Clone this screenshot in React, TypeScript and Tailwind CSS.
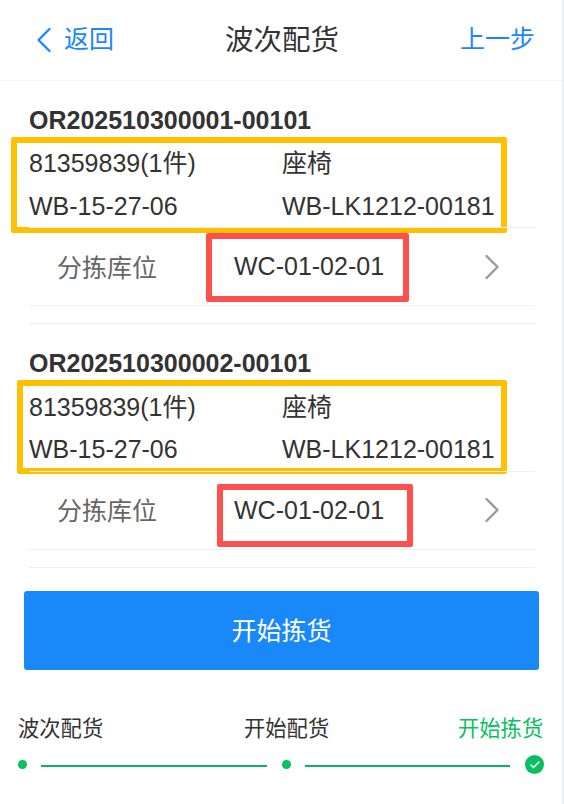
import { ChevronLeft, ChevronRight, Check } from 'lucide-react';

const font = { fontFamily: '"Liberation Sans", "Noto Sans CJK SC", sans-serif' };

function OrderCard({ code, yellow, red }: { code: string; yellow: string; red: string }) {
  return (
    <section className="relative">
      <h2 className="h-[40.5px] text-[25px] font-bold leading-[36px] text-[#333]">{code}</h2>
      <div className="relative">
        <div className="grid grid-cols-[253px_1fr] text-[25px] leading-[42.5px] text-[#333]">
          <span>81359839(1件)</span>
          <span>座椅</span>
          <span>WB-15-27-06</span>
          <span>WB-LK1212-00181</span>
        </div>
        <div className={`absolute rounded-[2px] border-[6px] border-[#ffc000] ${yellow}`} />
      </div>
      <div className="relative flex h-[79px] items-center border-y border-[#f0f0f0] pl-[28px] pr-[21px]">
        <span className="w-[177px] pt-[3px] text-[25px] text-[#666]">分拣库位</span>
        <span className="flex-1 text-[25px] text-[#333]">WC-01-02-01</span>
        <ChevronRight size={44} strokeWidth={1.3} className="text-[#999]" />
        <div className={`absolute rounded-[2px] border-[6px] border-[#ff5050] ${red}`} />
      </div>
      <div className="h-[18px] border-b border-[#f0f0f0]" />
    </section>
  );
}

function Dot() {
  return <span className="h-[9px] w-[9px] shrink-0 rounded-full bg-[#07c160]" />;
}

export default function App() {
  return (
    <div className="h-[804px] w-[564px] overflow-hidden border-r-2 border-[#eef0f5] bg-white" style={font}>
      <header className="flex h-[81px] items-center justify-between border-b border-[#f5f5f5] pl-[29px] pr-[27px]">
        <div className="flex w-[120px] items-center text-[25px] text-[#1989fa]">
          <ChevronLeft size={44} strokeWidth={1.3} className="-ml-[7px] shrink-0" />
          <span className="-ml-[2px]">返回</span>
        </div>
        <h1 className="text-[28.5px] text-[#333]">波次配货</h1>
        <div className="w-[120px] text-right text-[25px] text-[#1989fa]">上一步</div>
      </header>

      <main className="flex flex-col gap-[21px] pl-[29px] pr-[27px] pt-[20.75px]">
        <OrderCard code="OR202510300001-00101" yellow="-left-[18px] -top-[5.5px] h-[96px] w-[496px]" red="left-[177px] top-[5px] h-[69px] w-[203px]" />
        <OrderCard code="OR202510300002-00101" yellow="-left-[12px] -top-[5.5px] h-[94px] w-[490px]" red="left-[188px] top-[12.5px] h-[63px] w-[196px]" />
      </main>

      <div className="px-[24px] pt-[23.25px]">
        <button className="h-[79px] w-[515px] rounded-[3px] bg-[#1989fa] pt-[3px] text-[25px] text-white">开始拣货</button>
      </div>

      <footer className="pl-[18px] pt-[45px]">
        <div className="grid w-[526px] grid-cols-[226px_214px_1fr] text-[21.3px] leading-[28px]">
          <span className="text-[#333]">波次配货</span>
          <span className="text-[#333]">开始配货</span>
          <span className="text-[#07c160]">开始拣货</span>
        </div>
        <div className="mt-[12px] flex items-center">
          <Dot />
          <span className="ml-[14px] mr-[15px] h-[2px] w-[226px] translate-y-[1px] bg-[#07b65a]" />
          <Dot />
          <span className="ml-[14px] mr-[15px] h-[2px] w-[205px] translate-y-[1px] bg-[#07b65a]" />
          <span className="flex h-[19px] w-[19px] items-center justify-center rounded-full bg-[#07c160] text-white">
            <Check size={12} strokeWidth={3} />
          </span>
        </div>
      </footer>
    </div>
  );
}
